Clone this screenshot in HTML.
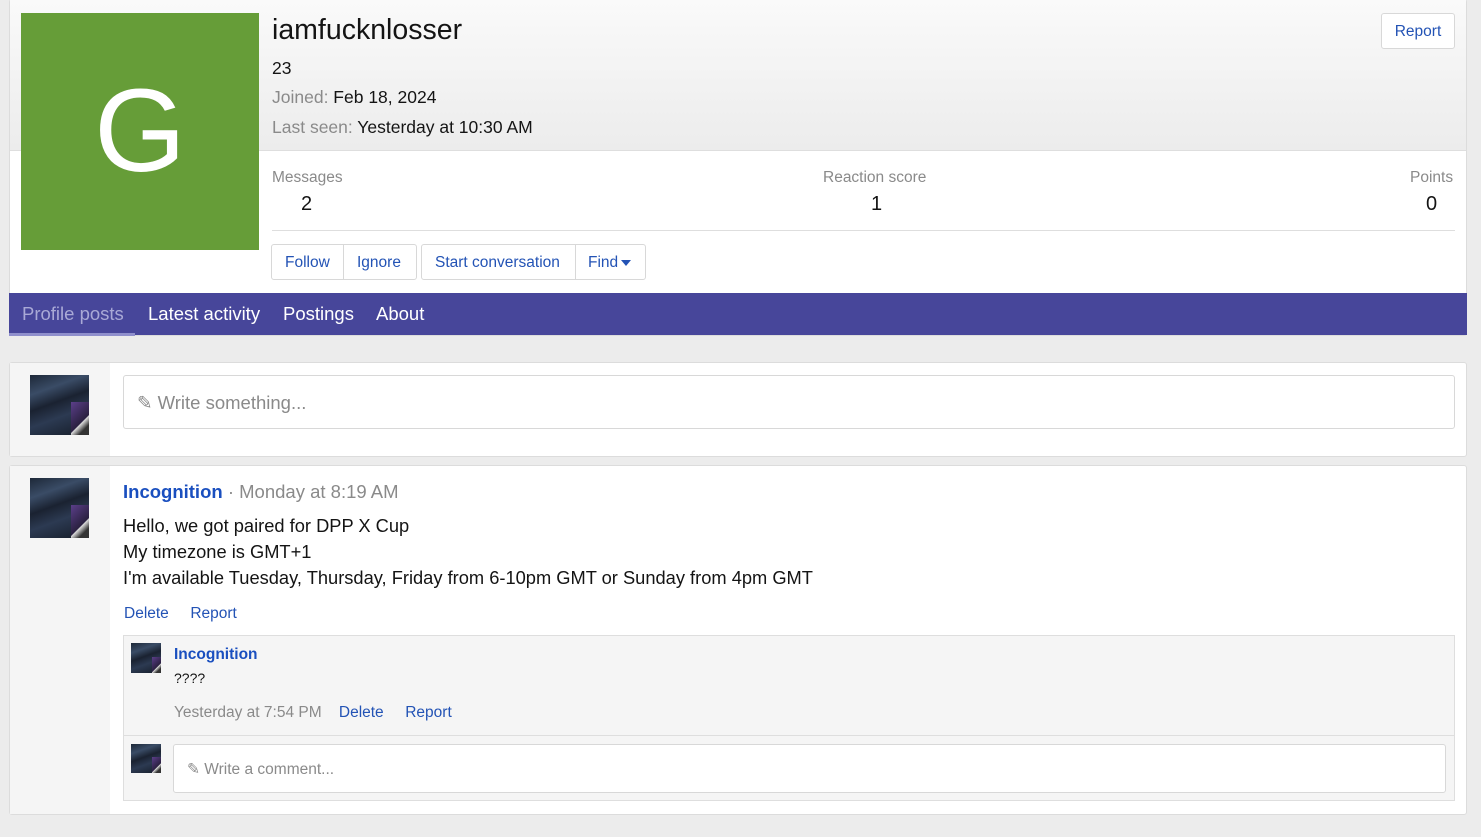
<!DOCTYPE html>
<html><head><meta charset="utf-8"><style>
*{box-sizing:border-box;margin:0;padding:0}
body{width:1481px;height:837px;background:#ececec;font-family:"Liberation Sans",sans-serif;color:#141414;position:relative;overflow:hidden}
.abs{position:absolute}
.card{position:absolute;left:9px;width:1458px;background:#fff;border:1px solid #dcdcdc;border-radius:3px}
.ava{position:absolute;background:linear-gradient(160deg,#1d2838 0%,#3a4c66 25%,#1a2231 45%,#2c3a52 65%,#151c28 100%);overflow:hidden}
.ava:after{content:"";position:absolute;right:0;bottom:0;width:30%;height:55%;background:linear-gradient(135deg,#5b3f8a,#2a2040 60%,#ddd 62%,#333 80%)}
.lnk{color:#2353b5}
.gry{color:#8a8a8a}
.btn{position:absolute;top:244px;height:36px;border:1px solid #d8d8d8;border-radius:3px;background:#fff;display:flex;color:#2353b5;font-size:15.5px}
.btn>span{padding:0 13px;line-height:35px;border-right:1px solid #d8d8d8;white-space:nowrap}
.btn>span:last-child{border-right:none}
.tri{display:inline-block;width:0;height:0;border-left:5px solid transparent;border-right:5px solid transparent;border-top:6px solid #2353b5;vertical-align:middle;margin-left:3px}
</style></head><body>
<div class="card" style="top:-1px;height:337px;border-top:none">
 <div class="abs" style="left:0;top:0;width:1456px;height:152px;background:linear-gradient(#fafafa,#ececec);border-bottom:1px solid #dedede"></div>
 <div class="abs" style="left:-1px;top:294px;width:1458px;height:42px;background:#47469a"></div>
</div>
<div class="abs" style="left:21px;top:13px;width:238px;height:237px;background:#669d38;color:#fff;font-size:118px;text-align:center;line-height:237px">G</div>
<div class="abs" style="left:272px;top:14px;font-size:28.5px">iamfucknlosser</div>
<div class="abs" style="left:272px;top:58px;font-size:17.5px">23</div>
<div class="abs" style="left:272px;top:87px;font-size:17.5px"><span class="gry">Joined:</span> Feb 18, 2024</div>
<div class="abs" style="left:272px;top:117px;font-size:17.5px"><span class="gry">Last seen:</span> Yesterday at 10:30 AM</div>
<div class="abs" style="left:1381px;top:13px;width:74px;height:36px;border:1px solid #d8d8d8;border-radius:3px;background:#fff;color:#2353b5;font-size:15.5px;text-align:center;line-height:35px">Report</div>
<div class="abs gry" style="left:272px;top:169px;font-size:15.5px">Messages</div>
<div class="abs" style="left:301px;top:193px;font-size:20px">2</div>
<div class="abs gry" style="left:823px;top:169px;font-size:15.5px">Reaction score</div>
<div class="abs" style="left:871px;top:193px;font-size:20px">1</div>
<div class="abs gry" style="left:1410px;top:169px;font-size:15.5px">Points</div>
<div class="abs" style="left:1426px;top:193px;font-size:20px">0</div>
<div class="abs" style="left:272px;top:230px;width:1183px;height:1px;background:#dedede"></div>
<div class="btn" style="left:271px"><span style="width:72px">Follow</span><span style="width:72px">Ignore</span></div>
<div class="btn" style="left:421px"><span style="width:154px">Start conversation</span><span style="width:69px;padding:0 12px">Find<i class="tri"></i></span></div>
<div class="abs" style="left:22px;top:303px;font-size:18.5px;color:#a9a9d6">Profile posts</div>
<div class="abs" style="left:9px;top:333px;width:126px;height:3px;background:#8f8fcc"></div>
<div class="abs" style="left:148px;top:303px;font-size:18.5px;color:#fff">Latest activity</div>
<div class="abs" style="left:283px;top:303px;font-size:18.5px;color:#fff">Postings</div>
<div class="abs" style="left:376px;top:303px;font-size:18.5px;color:#fff">About</div>

<div class="card" style="top:362px;height:95px">
 <div class="abs" style="left:0;top:0;width:100px;height:93px;background:#f5f5f5"></div>
</div>
<div class="ava" style="left:30px;top:375px;width:59px;height:60px"></div>
<div class="abs" style="left:123px;top:375px;width:1332px;height:54px;border:1px solid #d8d8d8;border-radius:3px;background:#fff;font-size:18.5px;color:#8a8a8a;padding:16px 0 0 13px">✎ Write something...</div>

<div class="card" style="top:465px;height:350px">
 <div class="abs" style="left:0;top:0;width:100px;height:348px;background:#f5f5f5"></div>
</div>
<div class="ava" style="left:30px;top:478px;width:59px;height:60px"></div>
<div class="abs" style="left:123px;top:481px;font-size:18.5px"><b class="lnk" style="color:#1a4fbf">Incognition</b> <span class="gry">· Monday at 8:19 AM</span></div>
<div class="abs" style="left:123px;top:513px;font-size:18.3px;line-height:26px">Hello, we got paired for DPP X Cup<br>My timezone is GMT+1<br>I'm available Tuesday, Thursday, Friday from 6-10pm GMT or Sunday from 4pm GMT</div>
<div class="abs lnk" style="left:124px;top:605px;font-size:15.5px">Delete &nbsp;&nbsp;&nbsp; Report</div>
<div class="abs" style="left:123px;top:635px;width:1332px;height:166px;background:#f5f5f5;border:1px solid #dedede"></div>
<div class="abs" style="left:124px;top:735px;width:1330px;height:1px;background:#dedede"></div>
<div class="ava" style="left:131px;top:643px;width:30px;height:30px"></div>
<div class="abs" style="left:174px;top:646px;font-size:15.5px;font-weight:bold;color:#1a4fbf">Incognition</div>
<div class="abs" style="left:174px;top:670px;font-size:14px">????</div>
<div class="abs" style="left:174px;top:704px;font-size:15.5px"><span class="gry">Yesterday at 7:54 PM</span> &nbsp;&nbsp; <span class="lnk">Delete</span> &nbsp;&nbsp;&nbsp; <span class="lnk">Report</span></div>
<div class="ava" style="left:131px;top:744px;width:30px;height:29px"></div>
<div class="abs" style="left:173px;top:744px;width:1273px;height:49px;border:1px solid #d8d8d8;border-radius:3px;background:#fff;font-size:15.5px;color:#8a8a8a;padding:15px 0 0 13px">✎ Write a comment...</div>
</body></html>
